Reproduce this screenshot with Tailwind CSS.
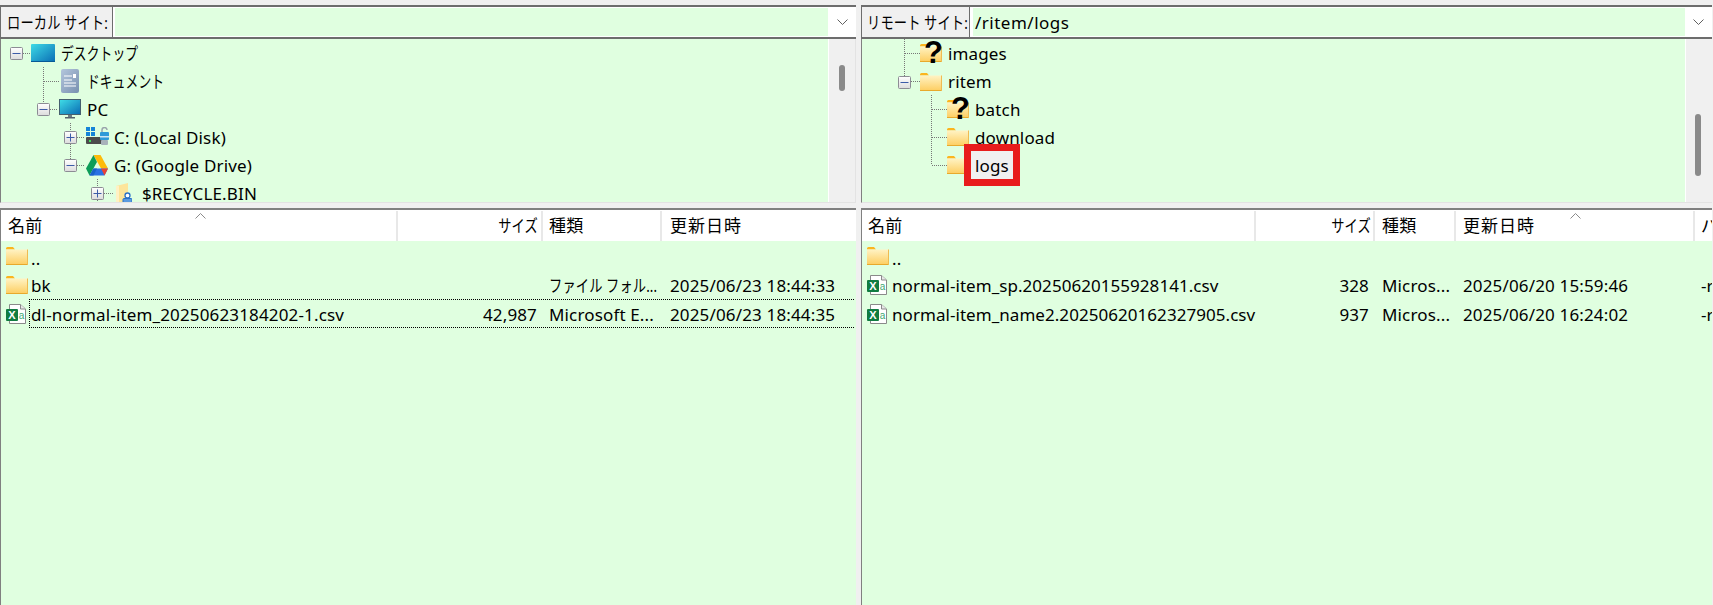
<!DOCTYPE html>
<html lang="ja">
  <head>
    <meta charset="UTF-8" />
    <title>FileZilla</title>
    <script src="https://cdn.jsdelivr.net/npm/@tailwindcss/browser@4"></script>
  </head>
  <body class="bg-[#f0f0f0] w-[1713px] h-[605px] overflow-hidden text-black text-[17px] leading-[20px] tracking-[0.15px] font-['Noto_Sans','Noto_Sans_CJK_JP',sans-serif]">
    <!-- shared icons -->
    <svg class="absolute w-0 h-0" width="0" height="0">
      <defs>
        <linearGradient id="folderFill" x1="0" y1="0" x2="0" y2="1"><stop offset="0" stop-color="#fff3c4" /><stop offset="1" stop-color="#fdcd5f" /></linearGradient>
        <linearGradient id="screenFill" x1="0" y1="0" x2="1" y2="1"><stop offset="0" stop-color="#3edbe6" /><stop offset="1" stop-color="#0a6db4" /></linearGradient>
        <linearGradient id="docFill" x1="0" y1="0" x2="1" y2="1"><stop offset="0" stop-color="#b4c6dc" /><stop offset="1" stop-color="#7890b0" /></linearGradient>
        <linearGradient id="boxFill" x1="0" y1="0" x2="0" y2="1"><stop offset="0" stop-color="#ffffff" /><stop offset="1" stop-color="#dcdcdc" /></linearGradient>
        <symbol id="folder" viewBox="0 0 22 18">
          <path d="M0 1.500Q0 0 1.500 0H7l2 2.500H0z" fill="#fbb51e" />
          <rect y="2.500" width="22" height="15.500" fill="url(#folderFill)" />
          <rect y="17" width="22" height="1" fill="#e8a92c" />
          <rect x="21" y="2.500" width="1" height="15.500" fill="#efbb52" />
        </symbol>
        <symbol id="minus" viewBox="0 0 13 13">
          <rect x=".5" y=".5" width="12" height="12" rx="1" fill="url(#boxFill)" stroke="#8c8c94" />
          <rect x="2.500" y="6" width="8" height="1" fill="#3c5ca8" />
        </symbol>
        <symbol id="plus" viewBox="0 0 13 13">
          <rect x=".5" y=".5" width="12" height="12" rx="1" fill="url(#boxFill)" stroke="#8c8c94" />
          <rect x="2.500" y="6" width="8" height="1" fill="#3c5ca8" />
          <rect x="6" y="2.500" width="1" height="8" fill="#3c5ca8" />
        </symbol>
        <symbol id="excel" viewBox="0 0 20 21">
          <path d="M3.500 1.500H14.500L19.500 6V20.500H3.500z" fill="#fff" stroke="#8a8a8a" />
          <path d="M14.500 1.500V6h5" fill="#e8e8e8" stroke="#8a8a8a" />
          <rect x="0" y="6" width="12" height="12" rx="1" fill="#107c41" />
          <text x="6" y="16" text-anchor="middle" font-family="Liberation Sans" font-weight="700" font-size="11" fill="#fff">X</text>
          <text x="15.500" y="16" text-anchor="middle" font-family="Liberation Sans" font-size="10" fill="#3aa873">a</text>
        </symbol>
        <symbol id="sortUp" viewBox="0 0 11 6">
          <path d="M.5 5.500 5.500.5l5 5" fill="none" stroke="#8a8a8a" />
        </symbol>
        <symbol id="chevronDown" viewBox="0 0 11 6">
          <path d="M.5.5l5 5 5-5" fill="none" stroke="#606060" />
        </symbol>
      </defs>
    </svg>

    <div class="grid grid-cols-[856px_851px] gap-x-[5px] pt-[5px] h-full">
      <!-- local -->
      <section class="flex flex-col min-w-0">
        <div class="flex h-[34px] border-t-2 border-[#6d6d6d] border-b-2 bg-white">
          <div class="w-[113px] shrink-0 flex items-center pl-[6px] pt-[2px] bg-[#f0f0f0] border-x border-[#6d6d6d]">
            <span class="origin-left scale-x-[0.78] whitespace-nowrap">ローカル サイト:</span>
          </div>
          <div class="flex-1 my-[1px] ml-[2px] bg-[#e0ffe0]"></div>
          <div class="w-[28px] shrink-0 flex items-center justify-center"><svg class="w-[11px] h-[6px]"><use href="#chevronDown" /></svg></div>
        </div>
        <div class="flex h-[164px] border-l border-[#808080] border-r border-r-[#e3e3e3] border-b border-b-[#e3e3e3] bg-[#f0f0f0]">
          <div class="relative flex-1 bg-[#e0ffe0] overflow-hidden border-r border-white">
            <svg class="absolute inset-0 w-full h-full" fill="none" stroke="#777" stroke-dasharray="1 1">
              <path d="M22 14.500h8M42.500 28v37M43 42.500h16M49 70.500h8M69.500 84v8M69.500 105v15M76 98.500h8M76 126.500h8M96.500 140v8M96.500 161v3M103 154.500h10" />
            </svg>
            <div class="relative">
              <div class="flex items-center h-7 pl-[9px]"><svg class="w-[13px] h-[13px] mr-[8px]"><use href="#minus" /></svg>
                <svg class="w-[24px] h-[18px] mr-[6px]" viewBox="0 0 24 18"><rect width="24" height="18" rx="1" fill="url(#screenFill)" /><rect y="17" width="24" height="1" fill="#075a96" /></svg>
                <span class="pt-[2px] origin-left scale-x-[0.75] whitespace-nowrap">デスクトップ</span>
              </div>
              <div class="flex items-center h-7 pl-[60px]">
                <svg class="w-[18px] h-[24px] mr-[8px]" viewBox="0 0 18 24"><rect width="18" height="24" rx="2" fill="url(#docFill)" /><path d="M3 7h8M3 11h8M3 14h12M3 17h12" stroke="#fff" /><rect x="12" y="5" width="3" height="4" fill="#fff" /></svg>
                <span class="pt-[2px] origin-left scale-x-[0.75] whitespace-nowrap">ドキュメント</span>
              </div>
              <div class="flex items-center h-7 pl-[36px]"><svg class="w-[13px] h-[13px] mr-[9px]"><use href="#minus" /></svg>
                <svg class="w-[22px] h-[20px] mr-[6px]" viewBox="0 0 22 20"><rect width="22" height="16" fill="#45606f" /><rect x="1" y="1" width="20" height="14" fill="url(#screenFill)" /><rect x="9" y="16" width="4" height="2" fill="#6d7a84" /><rect x="6" y="18" width="10" height="1.500" fill="#55626c" /></svg>
                <span class="pt-[2px]">PC</span>
              </div>
              <div class="flex items-center h-7 pl-[63px]"><svg class="w-[13px] h-[13px] mr-[9px]"><use href="#plus" /></svg>
                <svg class="w-[23px] h-[20px] mr-[5px]" viewBox="0 0 23 20"><path d="M0 0h4v4H0zM5 0h4v4H5zM0 5h4v4H0zM5 5h4v4H5z" fill="#1584d8" /><rect y="10" width="16" height="7" rx="1" fill="#4c4c4c" /><rect x="3" y="13" width="2" height="2" fill="#3fe05a" /><path d="M16 5V3a2.500 2.500 0 0 1 5 0" fill="none" stroke="#9aa4ac" stroke-width="1.500" /><rect x="14" y="5" width="9" height="8" rx="1" fill="#2f9ad8" /><rect x="14" y="9" width="9" height="1.500" fill="#cfe6f4" /><rect x="15" y="13" width="7" height="5" rx="1" fill="#a8b2ba" /></svg>
                <span class="pt-[2px]">C: (Local Disk)</span>
              </div>
              <div class="flex items-center h-7 pl-[63px]"><svg class="w-[13px] h-[13px] mr-[9px]"><use href="#minus" /></svg>
                <svg class="w-[22px] h-[21px] mr-[6px]" viewBox="0 0 22 21"><path d="M7.500 0h7L22 13.500h-7z" fill="#fdbb0a" /><path d="M7.500 0 0 13.500l3.500 7L11 7z" fill="#0d9d58" /><path d="M7.500 13.500H22l-3.500 7H3.500z" fill="#2a71e4" /><path d="M15 13.500h7l-3.500 7z" fill="#ea4335" /><path d="M3.500 20.500 7.500 13.500H11L7.500 20.500z" fill="#1a63c8" /></svg>
                <span class="pt-[2px]">G: (Google Drive)</span>
              </div>
              <div class="flex items-center h-7 pl-[90px]"><svg class="w-[13px] h-[13px] mr-[12px]"><use href="#plus" /></svg>
                <svg class="w-[16px] h-[20px] mr-[10px]" viewBox="0 0 16 20"><path d="M0 3 12 0v20H0z" fill="#fde59a" /><path d="M0 3h3v17H0z" fill="#fff1c4" /><circle cx="11.500" cy="12.500" r="2.500" fill="#fff" stroke="#2a70c8" stroke-width="1.300" /><rect x="7" y="15.500" width="9" height="4.500" rx="1" fill="#5b9ae0" stroke="#2a70c8" /></svg>
                <span class="pt-[2px] leading-[16px] whitespace-nowrap">$RECYCLE.BIN</span>
              </div>
            </div>
          </div>
          <div class="w-[26px] shrink-0 pt-[26px] pl-[10px]"><div class="w-[6px] h-[26px] rounded-full bg-[#8a8a8a]"></div></div>
        </div>
        <div class="h-[5px]"></div>
        <div class="flex-1 flex flex-col border-t-2 border-[#808080] border-l border-l-[#808080] overflow-hidden">
          <div class="relative grid grid-cols-[397px_145px_119px_1fr] h-[31px] pt-[1px] bg-white shrink-0">
            <div class="flex items-center pl-[7px] border-r-2 border-[#e8e8e8]">名前</div>
            <div class="flex items-center justify-end pr-[3px] border-r-2 border-[#e8e8e8]"><span class="origin-right scale-x-[0.78] whitespace-nowrap">サイズ</span></div>
            <div class="flex items-center pl-[6px] border-r-2 border-[#e8e8e8]">種類</div>
            <div class="flex items-center pl-[8px] tracking-[1px]">更新日時</div>
            <svg class="absolute left-[194px] top-[3px] w-[11px] h-[6px]"><use href="#sortUp" /></svg>
          </div>
          <div class="flex-1 bg-[#e0ffe0] pt-[1px]">
            <div class="grid grid-cols-[397px_145px_119px_1fr] h-[28.500px] items-center">
              <div class="flex items-center pl-[5px]"><svg class="w-[22px] h-[18px] mr-[3px]"><use href="#folder" /></svg><span class="pt-[5px]">..</span></div>
            </div>
            <div class="grid grid-cols-[397px_145px_119px_1fr] h-[28.500px] items-center">
              <div class="flex items-center pl-[5px]"><svg class="w-[22px] h-[18px] mr-[3px]"><use href="#folder" /></svg><span class="pt-[3px]">bk</span></div>
              <div></div>
              <div class="pl-[6px] pt-[3px] whitespace-nowrap"><span class="inline-block origin-left scale-x-[0.78]">ファイル フォル...</span></div>
              <div class="pl-[8px] pt-[3px] whitespace-nowrap">2025/06/23 18:44:33</div>
            </div>
            <div class="relative grid grid-cols-[397px_145px_119px_1fr] h-[28.500px] items-center">
              <div class="absolute left-[28px] right-[2px] inset-y-0 border border-dotted border-black border-r-0"></div>
              <div class="flex items-center pl-[5px]"><svg class="shrink-0 w-[20px] h-[21px] mr-[5px]"><use href="#excel" /></svg><span class="pt-[3px] whitespace-nowrap">dl-normal-item_20250623184202-1.csv</span></div>
              <div class="text-right pt-[3px] pr-[6px]">42,987</div>
              <div class="pl-[6px] pt-[3px] whitespace-nowrap">Microsoft E...</div>
              <div class="pl-[8px] pt-[3px] whitespace-nowrap">2025/06/23 18:44:35</div>
            </div>
          </div>
        </div>
      </section>

      <!-- remote -->
      <section class="flex flex-col min-w-0 overflow-hidden">
        <div class="flex h-[34px] border-t-2 border-[#6d6d6d] border-b-2 bg-white">
          <div class="w-[109px] shrink-0 flex items-center pl-[5px] pt-[2px] bg-[#f0f0f0] border-x border-[#6d6d6d]">
            <span class="origin-left scale-x-[0.78] whitespace-nowrap">リモート サイト:</span>
          </div>
          <div class="flex-1 my-[1px] ml-[3px] bg-[#e0ffe0] flex items-center pl-[2px] pt-[2px] tracking-[0.5px]">/ritem/logs</div>
          <div class="w-[27px] shrink-0 flex items-center justify-center"><svg class="w-[11px] h-[6px]"><use href="#chevronDown" /></svg></div>
        </div>
        <div class="flex h-[164px] border-l border-[#808080] border-b border-b-[#e3e3e3] bg-[#f0f0f0]">
          <div class="relative flex-1 bg-[#e0ffe0] overflow-hidden border-r border-white">
            <svg class="absolute inset-0 w-full h-full" fill="none" stroke="#777" stroke-dasharray="1 1">
              <path d="M42.500 0v37M43 14.500h15M49 42.500h9M69.500 56v70M70 70.500h15M70 98.500h15M70 126.500h15" />
            </svg>
            <div class="relative">
              <div class="flex items-center h-7 pl-[58px]">
                <span class="relative w-[22px] h-[18px] mr-[6px]"><svg class="w-[22px] h-[18px]"><use href="#folder" /></svg><span class="absolute left-[4px] top-[-4px] text-[31px] leading-[26px] font-bold font-['Liberation_Sans']">?</span></span><span class="pt-[2px]">images</span>
              </div>
              <div class="flex items-center h-7 pl-[36px] mt-px"><svg class="w-[13px] h-[13px] mr-[9px]"><use href="#minus" /></svg>
                <svg class="w-[22px] h-[18px] mr-[6px]"><use href="#folder" /></svg><span>ritem</span>
              </div>
              <div class="flex items-center h-7 pl-[85px] -mt-px">
                <span class="relative w-[22px] h-[18px] mr-[6px]"><svg class="w-[22px] h-[18px]"><use href="#folder" /></svg><span class="absolute left-[4px] top-[-4px] text-[31px] leading-[26px] font-bold font-['Liberation_Sans']">?</span></span><span class="pt-[2px]">batch</span>
              </div>
              <div class="flex items-center h-7 pl-[85px]">
                <svg class="w-[22px] h-[18px] mr-[6px]"><use href="#folder" /></svg><span class="pt-[2px]">download</span>
              </div>
              <div class="flex items-center h-7 pl-[85px]">
                <svg class="w-[22px] h-[18px] mr-[6px]"><use href="#folder" /></svg>
                <span class="relative ml-[-11px] px-[4px] pt-[1px] border-[7px] border-[#e81c1c] bg-[#f0f0f0] leading-[27px]">logs</span>
              </div>
            </div>
          </div>
          <div class="w-[26px] shrink-0 pt-[75px] pl-[9px]"><div class="w-[6px] h-[62px] rounded-full bg-[#8a8a8a]"></div></div>
        </div>
        <div class="h-[5px]"></div>
        <div class="flex-1 flex flex-col border-t-2 border-[#808080] border-l border-l-[#808080] overflow-hidden">
          <div class="relative grid grid-cols-[394px_119px_81px_239px_1fr] h-[31px] pt-[1px] bg-white shrink-0">
            <div class="flex items-center pl-[6px] border-r-2 border-[#e8e8e8]">名前</div>
            <div class="flex items-center justify-end pr-[2px] border-r-2 border-[#e8e8e8]"><span class="origin-right scale-x-[0.78] whitespace-nowrap">サイズ</span></div>
            <div class="flex items-center pl-[7px] border-r-2 border-[#e8e8e8]">種類</div>
            <div class="flex items-center pl-[7px] border-r-2 border-[#e8e8e8] tracking-[1px]">更新日時</div>
            <div class="flex items-center pl-[6px] overflow-hidden">パ</div>
            <svg class="absolute left-[708px] top-[3px] w-[11px] h-[6px]"><use href="#sortUp" /></svg>
          </div>
          <div class="flex-1 bg-[#e0ffe0] pt-[1px]">
            <div class="grid grid-cols-[394px_119px_81px_239px_1fr] h-[28.500px] items-center">
              <div class="flex items-center pl-[5px]"><svg class="w-[22px] h-[18px] mr-[3px]"><use href="#folder" /></svg><span class="pt-[5px]">..</span></div>
            </div>
            <div class="grid grid-cols-[394px_119px_81px_239px_1fr] h-[28.500px] items-center">
              <div class="flex items-center pl-[5px]"><svg class="shrink-0 w-[20px] h-[21px] mr-[5px]"><use href="#excel" /></svg><span class="pt-[3px] tracking-[0.05px] whitespace-nowrap">normal-item_sp.20250620155928141.csv</span></div>
              <div class="text-right pt-[3px] pr-[6px]">328</div>
              <div class="pl-[7px] pt-[3px] whitespace-nowrap">Micros...</div>
              <div class="pl-[7px] pt-[3px] whitespace-nowrap">2025/06/20 15:59:46</div>
              <div class="pl-[6px] pt-[3px] whitespace-nowrap overflow-hidden">-rw-r--r--</div>
            </div>
            <div class="grid grid-cols-[394px_119px_81px_239px_1fr] h-[28.500px] items-center">
              <div class="flex items-center pl-[5px]"><svg class="shrink-0 w-[20px] h-[21px] mr-[5px]"><use href="#excel" /></svg><span class="pt-[3px] tracking-[0.05px] whitespace-nowrap">normal-item_name2.20250620162327905.csv</span></div>
              <div class="text-right pt-[3px] pr-[6px]">937</div>
              <div class="pl-[7px] pt-[3px] whitespace-nowrap">Micros...</div>
              <div class="pl-[7px] pt-[3px] whitespace-nowrap">2025/06/20 16:24:02</div>
              <div class="pl-[6px] pt-[3px] whitespace-nowrap overflow-hidden">-rw-r--r--</div>
            </div>
          </div>
        </div>
      </section>
    </div>
  </body>
</html>
